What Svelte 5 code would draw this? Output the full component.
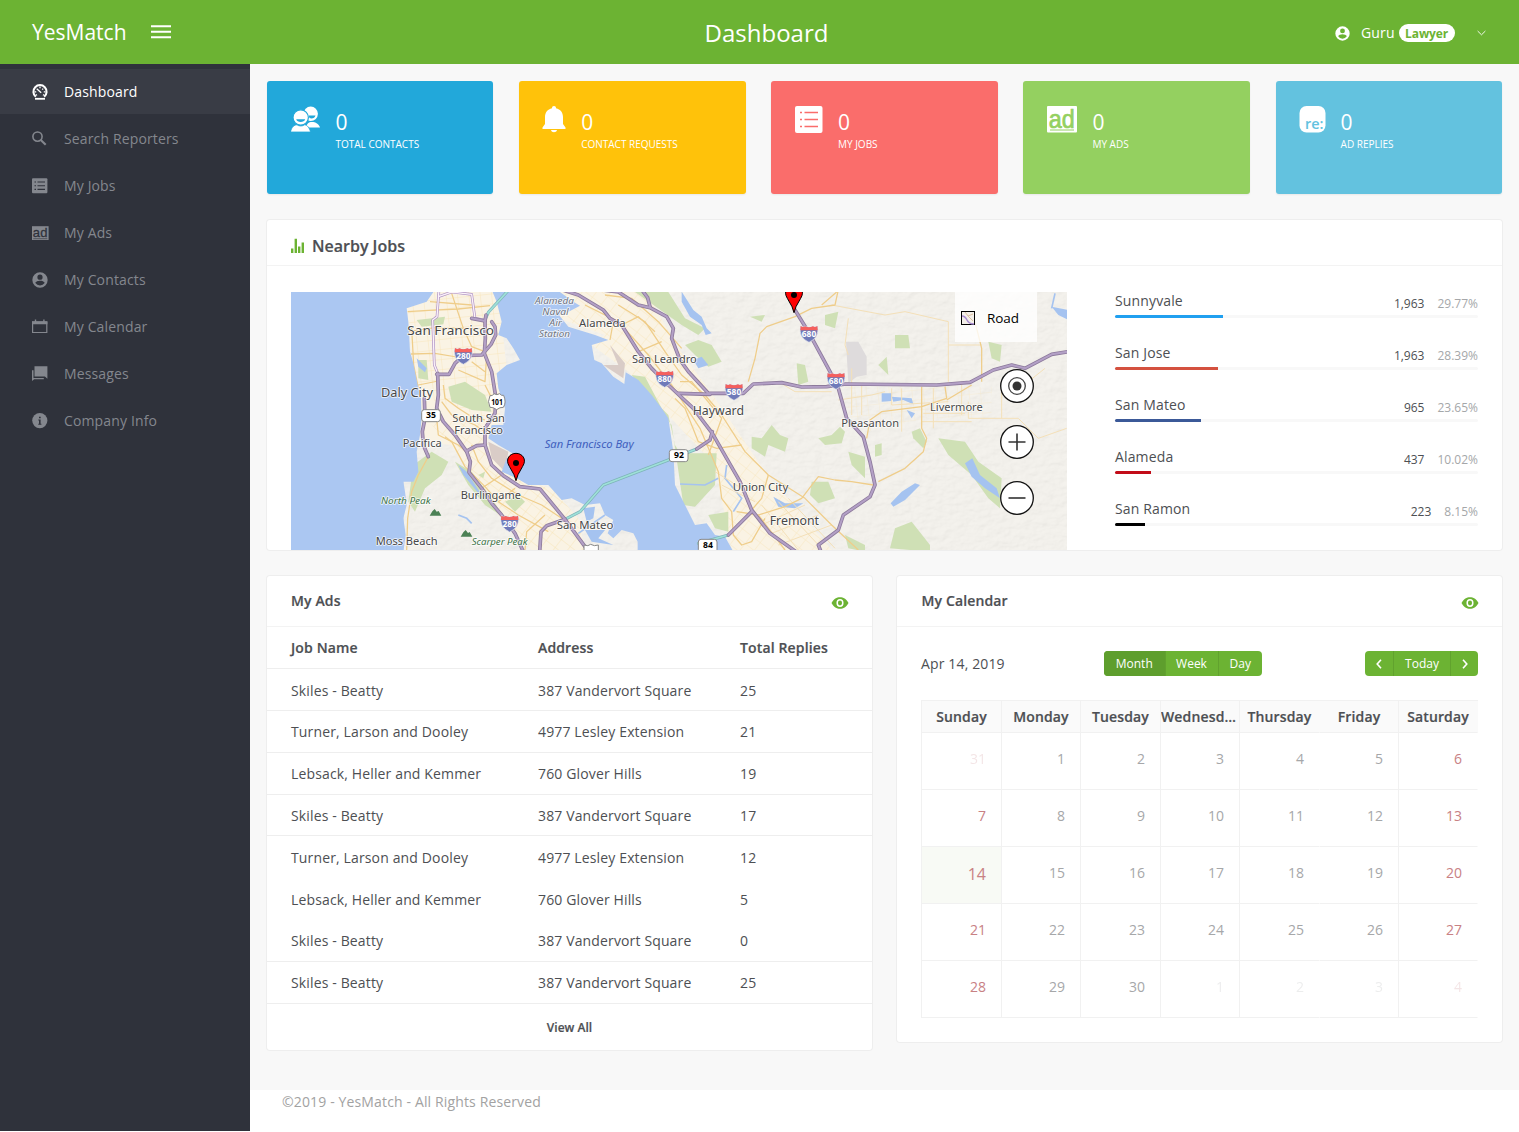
<script>
  const nav = [
    ['gauge', 'Dashboard'],
    ['search', 'Search Reporters'],
    ['list', 'My Jobs'],
    ['ad', 'My Ads'],
    ['user', 'My Contacts'],
    ['calendar', 'My Calendar'],
    ['messages', 'Messages'],
    ['info', 'Company Info']
  ];
  const stats = [
    ['contacts', 'Total Contacts', 'blue', 30],
    ['bell', 'Contact Requests', 'yellow', 24],
    ['jobs', 'My Jobs', 'red', 28],
    ['adbig', 'My Ads', 'green', 30],
    ['reply', 'Ad Replies', 'cyan', 27]
  ];
  const cities = [
    { name: 'Sunnyvale', count: '1,963', pct: '29.77%', value: 29.77, color: '#20a0f0' },
    { name: 'San Jose', count: '1,963', pct: '28.39%', value: 28.39, color: '#d4513f' },
    { name: 'San Mateo', count: '965', pct: '23.65%', value: 23.65, color: '#3b5998' },
    { name: 'Alameda', count: '437', pct: '10.02%', value: 10.02, color: '#c20c18' },
    { name: 'San Ramon', count: '223', pct: '8.15%', value: 8.15, color: '#000' }
  ];
  const S = ['Skiles - Beatty', '387 Vandervort Square'];
  const T = ['Turner, Larson and Dooley', '4977 Lesley Extension'];
  const L = ['Lebsack, Heller and Kemmer', '760 Glover Hills'];
  const ads = [
    [...S, 25], [...T, 21], [...L, 19], [...S, 17],
    [...T, 12], [...L, 5], [...S, 0], [...S, 25]
  ];
  const dayNames = ['Sunday', 'Monday', 'Tuesday', 'Wednesday', 'Thursday', 'Friday', 'Saturday'];
  const days = Array.from({ length: 35 }, (_, i) => ({
    n: i === 0 ? 31 : i > 30 ? i - 30 : i,
    out: i === 0 || i > 30,
    weekend: i % 7 === 0 || i % 7 === 6,
    today: i === 14
  }));

  const freeways = [
    'M458 265L460 330L455 370L475 410L510 450L545 500L556 530L552 562L590 610L620 655L650 690L690 745L715 800',
    'M455 268H492L510 235L535 212L590 210L618 178L632 150L630 125L620 110',
    'M560 100L600 108L601 160L598 205L620 260L633 340L630 385L600 430L600 480L620 540L655 572L705 605L765 612L840 703L900 785',
    'M545 498L575 482L600 480',
    'M418 340L420 400L412 440L415 480L430 515',
    'M764 800L768 740L785 722L840 703',
    'M600 108L603 90',
    'M830 14L880 30L955 75L975 100L1010 120L1060 200L1100 250L1150 300L1225 370L1282 445L1365 590L1400 675L1455 745L1540 805',
    'M945 14L1000 21L1060 60L1095 68L1145 95L1165 130L1160 160L1185 225L1212 262L1270 325H1375L1405 297L1490 293L1550 306L1625 305L1682 297L1955 300L2055 292L2125 255L2180 240L2220 250L2300 208L2350 200',
    'M1070 14L1088 38L1095 65',
    'M1180 325L1275 328',
    'M1530 75L1570 140L1635 260L1660 310L1685 400L1735 455L1755 530L1770 600L1755 635L1675 690L1660 735L1600 780L1610 805',
    'M1235 492L1275 465L1282 440',
    'M1330 750L1400 680'
  ];
  const bridges = ['M603 98L610 82L672 14', 'M840 703L885 680L955 600L1150 525L1235 492', 'M1240 775L1330 750'];
  const arterials = [
    'M368 80L430 76L520 72L615 62', 'M378 207L450 205L515 216L560 214', 'M370 140L450 128L600 132', 'M435 50L560 60M500 25L535 130L560 185L600 200',
    'M400 300L460 288M380 130L386 240L402 320L405 380', 'M470 350L500 390L570 420L600 440', 'M475 300L480 340L520 370L560 395L600 405',
    'M455 400L460 450L520 480L545 500', 'M480 455L500 470L540 545L600 605L640 650L700 690L790 740',
    'M560 480L580 530L620 580L700 630L770 660L830 700', 'M430 515L400 570L380 620L368 700L365 795', 'M720 795L725 740L780 690',
    'M520 255L600 290L605 210', 'M560 230L600 260M600 300L620 340', 'M590 610L650 570M640 650L690 610',
    'M900 60L1000 110L1090 210L1160 300L1245 430L1300 560L1310 640L1340 680L1345 750L1370 780L1400 770L1440 700',
    'M1000 60L1080 110L1140 200L1190 270L1260 330L1310 390L1380 500L1450 570L1560 640L1640 720L1720 795',
    'M960 30L1040 40L1120 110L1190 190', 'M1010 120L1060 95L1110 140', 'M1060 200L1130 170M975 165L985 110',
    'M1170 340L1200 370L1240 470L1295 490L1370 480', 'M1185 290L1220 290L1310 400L1270 510',
    'M1390 290L1410 220L1425 145L1445 125L1530 95L1580 70L1650 60L1660 14', 'M1655 21L1610 60', 'M1980 305L1985 340L1910 365L1790 380L1755 405L1745 460',
    'M1910 305L1910 430L1925 460L1915 500L1860 550L1780 590', 'M1765 600L1700 590L1650 585L1600 575L1550 640L1500 665L1420 690',
    'M2090 290L2090 190L2075 130L2060 80', 'M1985 345L2060 300', 'M1355 680L1420 690L1500 795', 'M1450 570L1430 640L1400 675'
  ];
  const streets = [
    'M1640 60L1800 90L1860 80L1990 110V290', 'M1990 180H2090', 'M1700 250V390M1730 300V390M1660 345L1760 330L1800 320', 'M1850 310V440M1910 410H2060',
    'M1820 310V360L1990 350M1945 310V430M2030 290V390M1915 385H2040', 'M2050 350V400H2200L2260 460L2345 430', 'M1690 210L1680 180L1690 100', 'M2230 290L2280 250', 'M1480 290L1530 320L1640 320',
    'M2150 300V400', 'M1430 720L1560 660M1460 745L1600 690M1480 780L1640 720M1430 660L1540 795M1480 650L1600 780M1510 640L1650 790', 'M1290 560L1370 610L1440 600M1310 600L1410 650M1300 480L1350 560'
  ];
  const labels = [
    ['San Francisco', 367, 149, 260, 40], ['Daly City', 288, 337, 156, 38], ['South San', 502, 410, 158, 33], ['Francisco', 508, 448, 146, 33],
    ['Pacifica', 353, 485, 117, 33], ['Burlingame', 527, 641, 181, 33], ['San Mateo', 815, 731, 170, 35], ['Moss Beach', 272, 779, 186, 34],
    ['Alameda', 882, 126, 140, 34], ['San Leandro', 1041, 234, 194, 33], ['Hayward', 1223, 391, 154, 37], ['Union City', 1343, 617, 167, 35],
    ['Fremont', 1454, 719, 148, 37], ['Pleasanton', 1669, 426, 173, 34], ['Livermore', 1935, 378, 158, 33]
  ];
  const naval = [['Alameda', 750, 58, 117], ['Naval', 772, 91, 79], ['Air', 793, 124, 38], ['Station', 762, 157, 93]];
  const interstates = [[535, 213, 280], [674, 716, 280], [1139, 282, 880], [1347, 321, 580], [1572, 147, 680], [1653, 288, 680]];
  const pins = [[693, 587], [1527, 83]];
  const woods = [
    'M395 105L480 95L475 118L410 125Z', 'M400 225L425 225L430 285L400 280Z', 'M490 305L540 290L600 330L620 380L560 375L500 350Z',
    'M385 540L440 500L490 530L470 570L420 610L390 680L370 650Z', 'M510 530L560 560L620 640L660 700L600 660L550 600Z', 'M660 650L700 630L720 650L690 680Z', 'M580 570L600 560L595 580Z',
    'M1040 270L1080 275L1130 370L1150 390L1170 480L1185 505L1295 505L1290 600L1230 665L1195 660L1160 420Z',
    'M1200 180L1240 165L1280 180L1310 230L1270 245L1230 210Z', 'M1050 21L1150 21L1200 100L1260 130L1240 150L1190 120Z',
    'M1400 455L1430 460L1460 420L1485 450L1510 460L1500 500L1450 480L1440 515L1400 490Z', 'M1600 460L1640 450L1665 425L1680 440L1670 475L1620 480Z', 'M1690 500L1740 515L1740 580L1700 540Z',
    'M1580 590L1630 590L1650 640L1600 655L1575 630Z', 'M1880 440L1905 430L1925 470L1915 490L1885 460Z', 'M1960 460L2040 470L2080 530L2150 580L2145 670L2110 640L2060 570L1990 510Z',
    'M1830 150H1870L1875 190L1830 190Z', 'M1790 230L1805 215L1810 270L1780 240Z', 'M1830 730L1880 710L1935 780V800L1815 790Z', 'M1680 750L1740 780L1740 800L1690 790Z',
    'M1620 90L1660 80L1650 130L1620 120Z', 'M1535 235L1560 240L1570 290L1540 300Z', 'M2110 170L2150 180L2145 230L2120 220Z', 'M1270 690L1330 680L1330 740L1290 730Z', 'M1395 95L1440 90L1430 110Z', 'M1770 480L1790 475V510L1770 515Z'
  ];
</script>

{#snippet icon(name)}
  {#if name === 'gauge'}
    <svg viewBox="0 0 16 16"><g fill="none" stroke="currentColor" stroke-width="2"><path d="M3.8 12.8A6.6 6.6 0 1 1 12.2 12.8" /><path d="M3 14.8h10" stroke-width="1.800" /><path d="M4.700 4.700L9.200 8.700M8 2.500v1.700M2.500 7.800h1.700M11.800 7.800h1.700M11.200 4.600l-1 1M4 11.300l1-.7M12 11.300l-1-.7" stroke-width="1.300" /></g></svg>
  {:else if name === 'search'}
    <svg viewBox="0 0 16 16"><g fill="none" stroke="currentColor"><circle cx="5.5" cy="5.600" r="4.600" stroke-width="1.600" /><path d="M8.800 8.900l4.900 4.900" stroke-width="2.100" /></g></svg>
  {:else if name === 'list'}
    <svg viewBox="0 0 16 16"><rect y=".3" width="15.400" height="15" rx="1" fill="currentColor" /><path d="M2.500 4h1.500M5.500 4h7.500M2.500 7.700h1.500M5.500 7.700h7.500M2.500 11.400h1.500M5.500 11.400h7.500" stroke="#2f323b" stroke-width="1.100" /></svg>
  {:else if name === 'ad'}
    <svg viewBox="0 0 17 16"><rect y="1.200" width="16.600" height="13.800" fill="currentColor" /><text x=".8" y="12.200" font-size="13" font-family="Liberation Sans" textLength="14.600" fill="#2f323b" stroke="#2f323b" stroke-width=".3">ad</text><path d="M1.300 13.700h14" stroke="#2f323b" stroke-width=".6" /></svg>
  {:else if name === 'user'}
    <svg viewBox="0 0 24 24"><path fill="currentColor" d="M12 .5a11.5 11.5 0 1 0 0 23a11.5 11.5 0 0 0 0-23zm0 3.400a3.900 3.900 0 1 1 0 7.800a3.900 3.900 0 0 1 0-7.800zm0 16.300a8.200 8.200 0 0 1-6.900-3.700c0-2.300 4.600-3.500 6.900-3.500s6.900 1.200 6.900 3.500a8.200 8.200 0 0 1-6.900 3.700z" /></svg>
  {:else if name === 'calendar'}
    <svg viewBox="0 0 16 16"><path d="M.6 3h14.200v10.500H.6z" fill="none" stroke="currentColor" stroke-width="1.200" /><path d="M0 2.200h15.400v3H0zM2.800 .6h1.400v2H2.800zM11.200 .6h1.400v2h-1.400z" fill="currentColor" /></svg>
  {:else if name === 'messages'}
    <svg viewBox="0 0 16 16"><path d="M2.500 .3h12.900v12.500l-2.500-2.300H2.500z" fill="currentColor" /><path d="M0 4.200h1.500v7.700h10.300v1.300H2.200L0 15z" fill="currentColor" /></svg>
  {:else if name === 'info'}
    <svg viewBox="0 0 16 16"><circle cx="7.800" cy="7.600" r="7.600" fill="currentColor" /><path d="M7 3.800h1.700v1.500H7zM6.300 6.500h2.300v4.300h.8v1H6.300v-1H7V7.500h-.7z" fill="#2f323b" /></svg>
  {:else if name === 'contacts'}
    <svg viewBox="0 0 30 28"><g fill="#fff"><circle cx="19.700" cy="8.800" r="7.200" /><path d="M15 22.500c1-4 2.500-5.500 6-5.500s7 2 8 5.500z" /><circle cx="9.700" cy="12.500" r="7.700" stroke="#22a8da" stroke-width="1.200" /><path d="M-.5 27c1-5 3.800-7.200 6.500-7.200 2 1.600 5.500 1.600 7.500 0 2.800.2 5 3 6 7.200z" stroke="#22a8da" stroke-width=".8" /></g><path d="M5.200 14.300h9c-.8 3.500-8.200 3.500-9 0zM17.500 10.500h7c-.5 2.600-3.800 3.700-6 2.500z" fill="#22a8da" /></svg>
  {:else if name === 'bell'}
    <svg viewBox="0 0 24 28"><path d="M12 1c1.300 0 2 .8 2 2.200c4.500 1 7 4.300 7 8.800v7l2.500 3.500v1.500H.5v-1.500L3 19v-7c0-4.500 2.500-7.800 7-8.800C10 1.800 10.700 1 12 1zM9 25h6c-.5 3-5.500 3-6 0z" fill="#fff" /></svg>
  {:else if name === 'jobs'}
    <svg viewBox="0 0 28 28"><rect y="1" width="27.500" height="27" rx="2" fill="#fff" /><path d="M5 7.500h2M9.500 7.500h13.500M5 14.500h2M9.500 14.500h13.500M5 21.500h2M9.500 21.500h13.500" stroke="#fa6d6b" stroke-width="1.500" /></svg>
  {:else if name === 'adbig'}
    <svg viewBox="0 0 30 28"><rect y="1" width="30" height="26.500" rx="1" fill="#fff" /><text x="1.800" y="22.500" font-size="25" font-family="Liberation Sans" textLength="26" lengthAdjust="spacingAndGlyphs" fill="#94d060" stroke="#94d060" stroke-width=".7">ad</text><path d="M3 25h24" stroke="#94d060" /></svg>
  {:else if name === 'reply'}
    <svg viewBox="0 0 27 28"><rect x=".5" y="1" width="26" height="26.500" rx="7" fill="#fff" /><text x="6" y="23.500" font-size="14.500" font-weight="600" textLength="18.500" lengthAdjust="spacingAndGlyphs" fill="#63c2df">re:</text></svg>
  {/if}
{/snippet}

{#snippet eye()}
  <svg class="eye" viewBox="0 0 18 12"><path d="M.5 6C3 1.800 5.500.3 9 .3S15 1.800 17.500 6c-2.500 4.200-5 5.700-8.500 5.700S3 10.200.5 6z" fill="#6cb333" /><ellipse cx="9" cy="6" rx="2.800" ry="3.200" fill="none" stroke="#fff" stroke-width="1.500" /></svg>
{/snippet}

<div class="app">
  <header>
    <div class="brand">
      <span>YesMatch</span>
      <svg width="20" height="14" viewBox="0 0 20 14"><path d="M0 1.300h20M0 6.800h20M0 12.200h20" stroke="#fff" stroke-width="2" /></svg>
    </div>
    <h1>Dashboard</h1>
    <div class="account">
      {@render icon('user')}
      <span class="who">Guru</span>
      <span class="badge">Lawyer</span>
      <svg class="caret" viewBox="0 0 10 6"><path d="M.7.8L5 5L9.300.8" fill="none" stroke="#fff" /></svg>
    </div>
  </header>

  <aside>
    {#each nav as [ic, label], i}
      <a class:active={i === 0} href="#{ic}"><span class="ic" class:wide={ic === 'ad'}>{@render icon(ic)}</span>{label}</a>
    {/each}
  </aside>

  <main>
    <section class="stats">
      {#each stats as [ic, label, tone, w]}
        <div class="stat {tone}">
          <span class="sic" style:width="{w}px">{@render icon(ic)}</span>
          <div><b>0</b><small>{label}</small></div>
        </div>
      {/each}
    </section>

    <section class="panel nearby">
      <h2>
        <svg width="14" height="15" viewBox="0 0 14 15"><path d="M1.200 15v-4.500M4.800 15V.8M8.200 15V8.500M11.800 15V4.500" stroke="#6cb333" stroke-width="2.400" /></svg>
        Nearby Jobs
      </h2>
      <div class="nearby-body">
        <div class="map">
          <svg class="canvas" viewBox="18 21 2328 774" preserveAspectRatio="none">
            <defs>
              <filter id="hills" x="0" y="0" width="100%" height="100%">
                <feTurbulence type="fractalNoise" baseFrequency=".03 .05" numOctaves="4" seed="4" />
                <feDiffuseLighting surfaceScale="5" lighting-color="#fff"><feDistantLight azimuth="225" elevation="62" /></feDiffuseLighting>
              </filter>
              <pattern id="grid" width="34" height="30" patternUnits="userSpaceOnUse" patternTransform="rotate(-6)"><path d="M0 0H34M0 0V30" stroke="#f7e2b4" stroke-width="2.500" fill="none" /></pattern>
              <pattern id="grid2" width="34" height="30" patternUnits="userSpaceOnUse" patternTransform="rotate(38)"><path d="M0 0H34M0 0V30" stroke="#f7e2b4" stroke-width="2.500" fill="none" /></pattern>
              <clipPath id="land">
                <path d="M450 14L425 50L365 70L370 110L375 200L385 235L398 300L408 340L410 400L405 450L395 500L400 560L385 590L355 590L360 620L365 660L355 700L362 750L355 800H1058L1058 770L1045 745L1010 735L985 760L968 745L985 705L960 690L945 655L900 660L860 640L830 645L790 600L730 600L695 580L650 560L665 520L700 515L640 480L610 460L620 420L655 420L660 370L640 310L635 265L665 240L705 225L685 190L665 160L640 150L650 110L635 50L620 14Z" />
                <path d="M815 14L865 50L885 62L855 78L822 90L850 125L930 150L970 165L920 180L928 225L950 235L985 275L1018 297L1022 262L1060 285L1100 330L1130 370L1150 400L1165 500L1170 600L1200 660L1230 720L1265 715L1290 750L1320 755L1345 800H2350V14Z" />
              </clipPath>
            </defs>
            <rect x="0" y="0" width="2400" height="820" fill="#abc7f2" />
            <g clip-path="url(#land)">
              <rect x="0" y="0" width="2400" height="820" fill="#f4f2ed" />
              <rect x="0" y="0" width="2400" height="820" filter="url(#hills)" opacity=".18" class="shade" />
              <path d="M360 20H640L665 250L640 410L600 480L720 590L800 610L880 700L900 795H740L640 690L500 480L410 470Z" fill="#faf3e4" />
              <path d="M360 20H640L665 250L640 410L400 330Z" fill="url(#grid)" />
              <path d="M420 400L600 400L620 530L720 590L800 610L880 700L900 795H740L640 690L500 480Z" fill="url(#grid2)" />
              <path d="M820 14H1080L1180 190L1290 340L1440 560L1640 795H1340L1290 540L1130 370L1030 260L920 180L960 150L820 100Z" fill="#faf3e4" />
              <path d="M820 14H1080L1180 190L1290 340L1440 560L1640 795H1340L1290 540L1130 370L1030 260L920 180L960 150L820 100Z" fill="url(#grid2)" opacity=".8" />
              <path d="M1680 305H2120V400H1920L1760 440L1690 390Z" fill="url(#grid)" opacity=".5" />
              {#each woods as d}<path {d} fill="#cfe0b5" />{/each}
              <path d="M1683 170H1720L1745 215V270L1715 275L1690 295Z" fill="#dedbdc" />
              <path d="M610 470L670 500L660 560L620 520ZM975 180L1020 235L1015 280L955 240L1000 240Z" fill="#d9ccc7" />
              <path d="M395 220L425 250L420 262L400 245ZM520 540L545 560L590 630L580 625L535 570ZM895 670L930 665L925 700L905 710ZM900 735L960 735L940 760L985 780L920 770ZM1190 20L1225 75L1250 95L1265 130L1280 145L1262 150L1250 120L1215 95L1190 50ZM1225 225L1250 215L1270 240L1240 250ZM1465 635L1500 655L1555 655L1530 670L1480 665ZM1790 325L1820 325V348L1790 350ZM1820 335L1880 340L1885 358L1855 345L1825 350ZM1865 375L1890 385L1880 400ZM1817 655L1850 620L1890 595L1905 600L1860 645L1825 665ZM2040 535L2062 520L2085 570L2135 610L2145 640L2100 610L2060 575ZM2300 65L2350 75V105L2320 90Z" fill="#a5c3f0" />
              <path d="M1185 597L1260 600L1300 580M1325 540L1320 580L1370 640L1345 680M2300 70L2310 25M520 690L545 700L560 715M960 690L880 745" fill="none" stroke="#a5c3f0" stroke-width="5" />
              {#each streets as d}<path {d} class="street" />{/each}
              {#each arterials as d}<path {d} class="arterial" />{/each}
            </g>
            <g class="lines">
              {#each bridges as d}<path {d} stroke="#7db4b8" stroke-width="9" /><path {d} stroke="#9fe0d8" stroke-width="5" />{/each}
              <path d="M462 14L456 95L443 105L448 240L458 265M460 35L500 21L560 28L570 100L600 105" stroke="#ad90c3" stroke-width="8" />
              <path d="M462 14L456 95L443 105L448 240L458 265M460 35L500 21L560 28L570 100L600 105" stroke="#fbf2fa" stroke-width="4" />
              {#each freeways as d}<path {d} stroke="#8d7a9c" stroke-width="11" />{/each}
              {#each freeways as d}<path {d} stroke="#b3a0c6" stroke-width="6" />{/each}
            </g>
            <path d="M434 692L442 679L449 672L455 680L461 678L469 692ZM527 755L535 742L542 735L549 744L554 741L562 755Z" fill="#4c8155" />
            <g class="labels">
              {#each labels as [t, x, y, w, s]}<text {x} {y} textLength={w} font-size={s} lengthAdjust="spacingAndGlyphs">{t}</text>{/each}
              <g font-style="italic" font-size="29">
                {#each naval as [t, x, y, w]}<text {x} {y} textLength={w} lengthAdjust="spacingAndGlyphs" fill="#6f7480">{t}</text>{/each}
                <text x="288" y="657" textLength="149" lengthAdjust="spacingAndGlyphs" fill="#3f7548">North Peak</text>
                <text x="560" y="781" textLength="168" lengthAdjust="spacingAndGlyphs" fill="#3f7548">Scarper Peak</text>
                <text class="bay" x="779" y="490" textLength="267" lengthAdjust="spacingAndGlyphs" font-size="34">San Francisco Bay</text>
              </g>
            </g>
            <g class="shields">
              {#each interstates as [x, y, n]}
                <path transform="translate({x} {y})" d="M-25 -24Q-18 -19 -12 -23Q0 -17 12 -23Q18 -19 25 -24Q33 10 0 25Q-33 10 -25 -24Z" fill="#6f7ab9" stroke="#e8e8ef" stroke-width="2" />
                <path transform="translate({x} {y})" d="M-25 -24Q-18 -19 -12 -23Q0 -17 12 -23Q18 -19 25 -24L26 -11H-26Z" fill="#f5605d" />
                <text {x} y={y + 9} fill="#fff" textLength="43" lengthAdjust="spacingAndGlyphs">{n}</text>
              {/each}
              <rect x="410" y="374" width="56" height="36" rx="8" /><text x="438" y="399">35</text>
              <path d="M615 332Q623 334 627 326Q636 332 644 326Q649 333 656 331Q665 353 655 367Q645 366 635 374Q625 366 615 367Q606 350 615 332Z" /><text x="636" y="360" textLength="35" lengthAdjust="spacingAndGlyphs">101</text>
              <rect x="1153" y="494" width="56" height="36" rx="8" /><text x="1182" y="520">92</text>
              <rect x="1240" y="763" width="56" height="38" rx="8" /><text x="1269" y="789">84</text>
              <path d="M897 800V780Q910 785 917 778Q928 785 940 780V800Z" />
            </g>
            {#each pins as [x, y]}
              <path transform="translate({x} {y})" d="M0 0L-6 -18L-20 -43C-34 -65 -18 -82 0 -82S34 -65 20 -43L6 -18Z" fill="#f00" stroke="#000" stroke-width="3" />
              <circle cx={x} cy={y - 53} r="9" />
            {/each}
          </svg>
          <div class="road">
            <svg width="14" height="14" viewBox="0 0 14 14"><rect x=".5" y=".5" width="13" height="13" fill="#f3efe9" stroke="#000" /><path d="M1 5q3 0 5 4t7 4" fill="none" stroke="#a98bd0" stroke-width="1.500" /><path d="M4 1l3 4l5-2M7 5l5 5" fill="none" stroke="#dcc0a0" /></svg>
            Road
          </div>
          <div class="controls">
            <svg viewBox="0 0 34 34"><circle cx="17" cy="17" r="16.300" /><circle cx="17" cy="17" r="8.300" stroke="#444" /><circle cx="17" cy="17" r="4.500" class="dot" /></svg>
            <svg viewBox="0 0 34 34"><circle cx="17" cy="17" r="16.300" /><path d="M8.500 17h17M17 8.500v17" /></svg>
            <svg viewBox="0 0 34 34"><circle cx="17" cy="17" r="16.300" /><path d="M8.500 17h17" /></svg>
          </div>
        </div>
        <div class="cities">
          {#each cities as c}
            <div class="city">
              <div class="row"><span>{c.name}</span><em>{c.count}</em><i>{c.pct}</i></div>
              <div class="track"><div class="fill" style:width="{c.value}%" style:background={c.color}></div></div>
            </div>
          {/each}
        </div>
      </div>
    </section>

    <div class="cols">
      <section class="panel ads">
        <div class="phead"><h3>My Ads</h3>{@render eye()}</div>
        <div class="tr th"><span>Job Name</span><span>Address</span><span>Total Replies</span></div>
        {#each ads as [name, addr, n], i}
          <div class="tr" class:first={i === 0} class:plain={i === 4 || i === 5}><span>{name}</span><span>{addr}</span><span>{n}</span></div>
        {/each}
        <div class="all">View All</div>
      </section>

      <section class="panel cal">
        <div class="phead"><h3>My Calendar</h3>{@render eye()}</div>
        <div class="tools">
          <span class="date">Apr 14, 2019</span>
          <div class="group views"><span class="on">Month</span><span>Week</span><span>Day</span></div>
          <div class="group steps">
            <span><svg viewBox="0 0 6 10"><path d="M5 .8L1.200 5L5 9.200" /></svg></span>
            <span>Today</span>
            <span><svg viewBox="0 0 6 10"><path d="M1 .8L4.800 5L1 9.200" /></svg></span>
          </div>
        </div>
        <div class="grid">
          {#each dayNames as d}<div class="dn">{d}</div>{/each}
          {#each days as d}<div class="day" class:out={d.out} class:weekend={d.weekend} class:today={d.today}><span>{d.n}</span></div>{/each}
        </div>
      </section>
    </div>

    <footer>©2019 - YesMatch - All Rights Reserved</footer>
  </main>
</div>

<style>
  :global(body) { margin: 0; background: #fff; }
  .app { display: grid; grid-template: 64px 1067px / 250px 1fr; width: 1519px; height: 1131px; font: 14px/20px 'Open Sans', 'Noto Sans', sans-serif; letter-spacing: .14px; color: #4d4f53; }
  .app :global(*) { box-sizing: border-box; }
  svg { display: block; letter-spacing: 0; }
  header { grid-column: 1 / 3; background: #6cb333; color: #fff; display: grid; grid-template-columns: 250px 1fr 250px; align-items: center; }
  .brand { display: flex; align-items: center; gap: 24px; padding-left: 32px; font-size: 21px; line-height: 28px; letter-spacing: 0; }
  h1 { margin: 2px 0 0; padding-left: 14px; font-size: 24px; line-height: 32px; font-weight: 400; text-align: center; letter-spacing: 0; }
  .account { display: flex; align-items: center; padding-left: 66px; padding-top: 2px; }
  .account > svg { width: 15px; height: 15px; }
  .who { margin: 0 4px 0 11px; }
  .badge { background: #fff; color: #6cb333; border-radius: 9px; width: 56px; height: 18px; font-size: 12px; line-height: 19px; font-weight: 700; text-align: center; letter-spacing: -.1px; }
  .account > .caret { width: 9px; height: 6px; margin-left: 22px; }
  aside { background: #2f323b; padding-top: 5px; }
  aside a { display: flex; align-items: center; height: 45px; margin-bottom: 2px; padding-left: 32px; color: #84878e; text-decoration: none; }
  aside a.active { background: #393c45; color: #fff; }
  .ic { width: 32px; }
  .ic :global(svg) { width: 16px; height: 16px; }
  .wide :global(svg) { width: 17px; }
  main { background: #f8f8f8; padding: 17px 17px 0; display: flex; flex-direction: column; }
  .stats { display: grid; grid-template-columns: repeat(5, 1fr); gap: 25.750px; letter-spacing: 0; }
  .stat { height: 113px; border-radius: 3px; color: #fff; display: flex; padding: 24px 24px 0; gap: 15px; box-shadow: 0 1px 2px #0001; }
  .sic { flex: none; }
  .sic :global(svg) { width: 100%; height: 28px; }
  .stat b { display: block; font-size: 21px; line-height: 24px; font-weight: 400; margin-top: 5px; }
  .stat small { display: block; font-size: 10px; line-height: 14px; text-transform: uppercase; margin-top: 3px; white-space: nowrap; }
  .blue { background: #22a8da; gap: 14.500px; }
  .yellow { background: #ffc20a; padding-left: 23px; }
  .red { background: #fa6d6b; gap: 14.700px; }
  .green { background: #94d060; }
  .cyan { background: #63c2df; padding-left: 23px; }
  .panel { background: #fff; border-radius: 3px; box-shadow: 0 0 0 1px #eee; }
  .nearby { margin-top: 26px; height: 330px; }
  h2 { margin: 0; height: 46px; border-bottom: 1px solid #f3f3f3; padding: 6px 24px 0; display: flex; align-items: center; gap: 7px; font-size: 16px; font-weight: 600; letter-spacing: 0; -webkit-text-stroke: .2px; }
  .nearby-body { display: flex; padding: 26px 24px 0; justify-content: space-between; }
  .map { position: relative; width: 776px; height: 258px; overflow: hidden; }
  .canvas { width: 776px; height: 258px; }
  .shade { mix-blend-mode: multiply; }
  .street { fill: none; stroke: #f4e0b8; stroke-width: 3; }
  .arterial { fill: none; stroke: #efcd8a; stroke-width: 3.800; stroke-linejoin: round; }
  .lines { fill: none; stroke-linejoin: round; stroke-linecap: round; }
  .labels text { paint-order: stroke; stroke: #fffc; stroke-width: 5; stroke-linejoin: round; font-family: 'Noto Sans', sans-serif; }
  .labels text.bay { fill: #3f60bd; stroke: none; }
  .labels { fill: #484848; }
  .shields { font: 700 26px 'Noto Sans', sans-serif; text-anchor: middle; }
  .shields rect, .shields > path:not([transform]) { fill: #fff; stroke: #888; stroke-width: 3; }
  .road { position: absolute; right: 30px; top: 0; width: 82px; height: 50px; background: #fffc; display: flex; align-items: center; gap: 12px; padding: 2px 0 0 6px; color: #000; font-size: 13.500px; letter-spacing: -.1px; }
  .controls { position: absolute; right: 33px; top: 77px; display: grid; gap: 22px; }
  .controls svg { width: 34px; height: 34px; fill: #fff; stroke: #111; stroke-width: 1.300; }
  .controls path { stroke: #333; stroke-width: 1.600; }
  .controls .dot { fill: #333; stroke: none; }
  .cities { width: 363px; }
  .city { height: 52px; }
  .row { display: flex; height: 23px; line-height: 18px; }
  .row span { flex: 1; }
  .row em, .row i { font-style: normal; font-size: 12px; line-height: 24px; letter-spacing: 0; }
  .row i { color: #a5a7a9; margin-left: 13px; }
  .track { height: 3px; background: #f8f8f8; border-radius: 2px; }
  .fill { height: 3px; border-radius: 2px 0 0 2px; }
  .cols { display: grid; grid-template-columns: 605px 605px; justify-content: space-between; align-items: start; margin-top: 26px; flex: 1; }
  .phead { height: 51px; border-bottom: 1px solid #f3f3f3; display: flex; justify-content: space-between; padding: 15px 23.500px 0 24px; }
  h3 { margin: 0; font-size: 14px; line-height: 20px; font-weight: 600; -webkit-text-stroke: .2px; }
  .eye { width: 18px; height: 12px; margin-top: 6px; }
  .ads { height: 474px; }
  .tr { display: grid; grid-template-columns: 247px 202px 1fr; height: 41.850px; padding: 2px 24px 0; align-items: center; border-bottom: 1px solid #eee; }
  .tr.th { font-weight: 600; height: 42px; padding-top: 1px; -webkit-text-stroke: .2px; }
  .tr.first { padding-top: 3px; }
  .tr.plain { border-color: transparent; }
  .all { text-align: center; font-size: 12px; font-weight: 600; padding-top: 14px; letter-spacing: 0; -webkit-text-stroke: .2px; }
  .cal { height: 466px; }
  .cal .phead { padding-right: 23px; padding-left: 24.500px; }
  .tools { display: flex; align-items: center; height: 73px; padding: 0 24px; }
  .date { width: 183px; }
  .group { display: flex; background: #6cb333; color: #fff; border-radius: 4px; overflow: hidden; height: 25px; font-size: 12px; line-height: 25px; letter-spacing: 0; }
  .group span { display: flex; align-items: center; justify-content: center; border-left: 1px solid #61a22e; }
  .group span:first-child { border-left: 0; }
  .views span { width: 53px; }
  .views span:first-child { width: 60.500px; }
  .views span:last-child { width: 44.500px; }
  .group .on { background: #5e9e2d; }
  .steps { margin-left: auto; }
  .steps span { width: 28px; }
  .steps span:nth-child(2) { width: 57px; }
  .steps svg { width: 6px; height: 10px; fill: none; stroke: #fff; stroke-width: 1.600; }
  .grid { display: grid; grid-template: 32px repeat(5, 57px) / 80px 79px 80px 79px 80px 79px 1fr; margin: 0 24px; border-top: 1px solid #f1f1f1; border-left: 1px solid #f1f1f1; }
  .grid > div { border-right: 1px solid #f1f1f1; border-bottom: 1px solid #f1f1f1; }
  .grid > .dn { background: #fafafa; font-weight: 600; text-align: center; line-height: 32px; overflow: hidden; text-overflow: ellipsis; white-space: nowrap; min-width: 0; -webkit-text-stroke: .2px; }
  .grid > div:nth-child(7n + 5), .grid > div:nth-child(7n) { border-right-color: transparent; }
  .day { text-align: right; padding: 16px 15px 0 0; color: #a6a7a9; letter-spacing: 0; }
  .day.weekend { color: #c88184; }
  .day.out span { opacity: .2; }
  .day.today { background: #f8faf5; font-size: 16px; padding-top: 17px; }
  footer { background: #fff; margin: 0 -17px; height: 41px; padding: 2px 32px; color: #a2a2a2; }
</style>
